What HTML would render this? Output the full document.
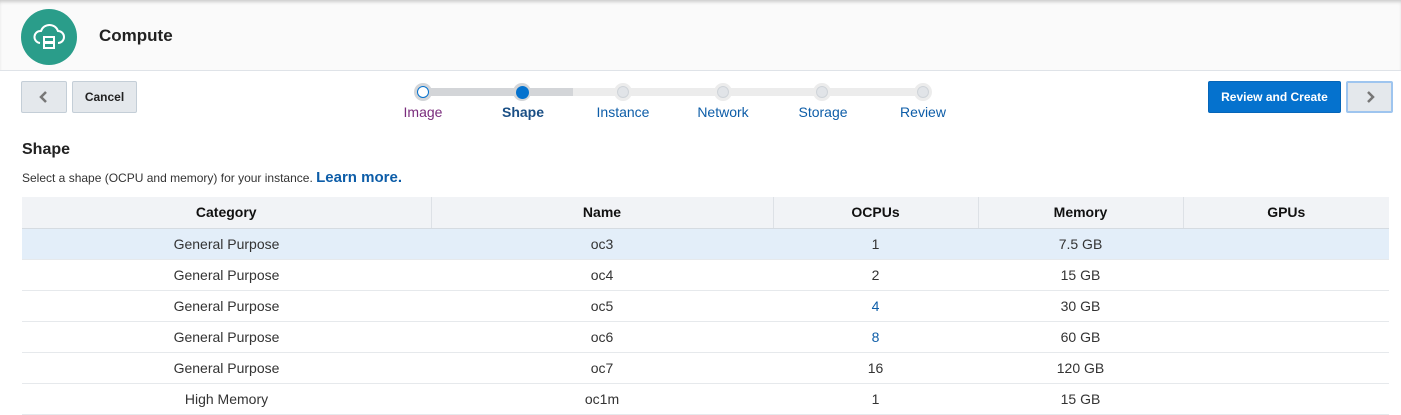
<!DOCTYPE html>
<html><head><style>
body{margin:0;width:1401px;height:400px;overflow:hidden;background:#fff;font-family:"Liberation Sans",Arial,sans-serif;color:#333;position:relative}
.hdr{position:absolute;left:0;top:0;width:1401px;height:70px;background:#fafafa;border-bottom:1px solid #dfe3e8;box-shadow:inset 0 3px 3px -1px #ccc}
.logo{position:absolute;left:21px;top:9px;width:56px;height:56px;border-radius:50%;background:#2a9d8a}
.title{position:absolute;left:99px;top:26px;font-size:17px;font-weight:bold;color:#222}
.btn{position:absolute;top:81px;height:32px;border:1px solid #c4ced7;background:#e4e8ec;border-radius:2px;box-sizing:border-box;font-size:12px;font-weight:bold;color:#222;display:flex;align-items:center;justify-content:center}
.step{position:absolute;top:104px;font-size:14px;color:#0d5da8;transform:translateX(-50%)}
.dot{position:absolute;top:83px;width:18px;height:18px;border-radius:50%;background:#ececec;transform:translateX(-50%)}
.dot i{position:absolute;left:3px;top:3px;border-radius:50%;background:#e1e4e8;border:1px solid #cfd4d9;box-sizing:border-box;width:12px;height:12px}
table{position:absolute;left:22px;top:197px;width:1367px;border-collapse:collapse;font-size:14px;table-layout:fixed}
th,td{padding:0;box-sizing:border-box}
th{height:31px;background:#f1f3f6;font-size:14px;color:#111;border-right:1px solid #dde1e6;border-bottom:1px solid #d5dbe1}
td{height:31px;text-align:center;border-bottom:1px solid #e6e9ec;color:#333}
tr.sel td{background:#e3eef9}
</style></head><body>
<div class="hdr"></div>
<div class="logo"><svg width="56" height="56" viewBox="0 0 56 56" fill="none" stroke="#fff" stroke-width="2"><path d="M19 34a6 6 0 0 1 1-12a9 9 0 0 1 17 0a6 6 0 0 1 0 12"/><rect x="23" y="28" width="10" height="5"/><rect x="23" y="34" width="10" height="5"/></svg></div>
<div class="title">Compute</div>
<div class="btn" style="left:21px;width:46px"><svg width="14" height="14" viewBox="0 0 14 14"><path d="M9 2L4 7l5 5" fill="none" stroke="#777" stroke-width="2.5"/></svg></div>
<div class="btn" style="left:72px;width:65px">Cancel</div>
<div style="position:absolute;left:423px;top:88px;width:150px;height:8px;background:#d3d5d8"></div>
<div style="position:absolute;left:573px;top:88px;width:350px;height:8px;background:#ececec"></div>
<div class="dot" style="left:423px;background:#d3d5d8"><i style="background:#fff;border:1.5px solid #0572ce"></i></div>
<div class="dot" style="left:522px;background:#d3d5d8"><i style="background:#0572ce;border-color:#0572ce;width:13px;height:13px;left:2.5px;top:2.5px"></i></div>
<div class="dot" style="left:623px"><i></i></div>
<div class="dot" style="left:723px"><i></i></div>
<div class="dot" style="left:822px"><i></i></div>
<div class="dot" style="left:923px"><i></i></div>
<div class="step" style="left:423px;color:#7a2c7c">Image</div>
<div class="step" style="left:523px;font-weight:bold;color:#1a4f85">Shape</div>
<div class="step" style="left:623px">Instance</div>
<div class="step" style="left:723px">Network</div>
<div class="step" style="left:823px">Storage</div>
<div class="step" style="left:923px">Review</div>
<div class="btn" style="left:1208px;width:133px;background:#0572ce;border-color:#0565b8;color:#fff">Review and Create</div>
<div class="btn" style="left:1346px;width:47px;border:2px solid #9ec5ef"><svg width="14" height="14" viewBox="0 0 14 14"><path d="M5 2l5 5-5 5" fill="none" stroke="#777" stroke-width="2.5"/></svg></div>
<div style="position:absolute;left:22px;top:141px;font-size:16px;font-weight:bold;color:#222">Shape</div>
<div style="position:absolute;left:22px;top:169px;font-size:12px;color:#333">Select a shape (OCPU and memory) for your instance. <b style="font-size:15px;color:#0d5da8">Learn more.</b></div>
<table>
<tr><th style="width:409px">Category</th><th style="width:342px">Name</th><th style="width:205px">OCPUs</th><th style="width:205px">Memory</th><th style="border-right:none">GPUs</th></tr>
<tr class="sel"><td>General Purpose</td><td>oc3</td><td>1</td><td>7.5 GB</td><td></td></tr>
<tr><td>General Purpose</td><td>oc4</td><td>2</td><td>15 GB</td><td></td></tr>
<tr><td>General Purpose</td><td>oc5</td><td style="color:#0d5da8">4</td><td>30 GB</td><td></td></tr>
<tr><td>General Purpose</td><td>oc6</td><td style="color:#0d5da8">8</td><td>60 GB</td><td></td></tr>
<tr><td>General Purpose</td><td>oc7</td><td>16</td><td>120 GB</td><td></td></tr>
<tr><td>High Memory</td><td>oc1m</td><td>1</td><td>15 GB</td><td></td></tr>
</table>
</body></html>
